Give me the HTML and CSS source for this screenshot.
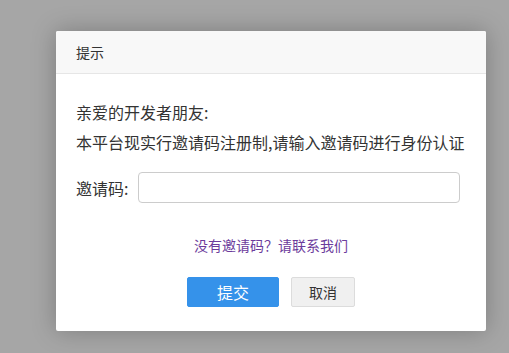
FILE: index.html
```html
<!DOCTYPE html>
<html lang="zh-CN">
<head>
  <meta charset="UTF-8" />
  <title>提示</title>
  <link rel="stylesheet" href="styles.css">
</head>
<body>

  <div class="dialog">
    <!-- Header -->
    <div class="dialog-head">提示</div>

    <!-- Body -->
    <div class="dialog-body">
      <p class="msg">亲爱的开发者朋友:</p>
      <p class="msg">本平台现实行邀请码注册制,请输入邀请码进行身份认证</p>

      <div class="field">
        <label class="field-label" for="code">邀请码:</label>
        <input class="field-input" id="code" type="text">
      </div>

      <a class="contact" href="#">没有邀请码？请联系我们</a>

      <div class="actions">
        <button class="btn btn-primary">提交</button>
        <button class="btn btn-default">取消</button>
      </div>
    </div>
  </div>

</body>
</html>
```
FILE: styles.css
```css
:root {
  --overlay: #a6a6a6;
  --head-bg: #f8f8f8;
  --line: #e6e6e6;
  --text: #333;
  --primary: #3592ea;
  --link: #6c3c9c;
}

html, body {
  height: 100%;
}

body {
  margin: 0;
  padding: 31px 0 0 56px;
  box-sizing: border-box;
  background-color: var(--overlay);
  font-family: "Noto Sans CJK SC", "Noto Sans", sans-serif;
  color: var(--text);
  overflow: hidden;
}

.dialog {
  width: 430px;
  background: #fff;
  border-radius: 2px;
  box-shadow: 0 0 24px rgba(0,0,0,0.25);
  overflow: hidden;
}

.dialog-head {
  height: 42px;
  line-height: 42px;
  padding: 0 20px;
  background: var(--head-bg);
  border-bottom: 1px solid var(--line);
  font-size: 14px;
  color: #333;
}

.dialog-body {
  padding: 23px 26px 24px 20px;
  display: flex;
  flex-direction: column;
}

.msg {
  margin: 0;
  font-size: 16px;
  line-height: 30px;
  white-space: nowrap;
}

.field {
  display: flex;
  align-items: center;
  gap: 9px;
  margin-top: 15px;
}

.field-label {
  font-size: 16px;
  width: 53px;
}

.field-input {
  flex: 1;
  height: 31px;
  box-sizing: border-box;
  border: 1px solid #ccc;
  border-radius: 4px;
  outline: none;
  padding: 0 8px;
}

.contact {
  align-self: center;
  margin-top: 32px;
  margin-left: 6px;
  font-size: 14px;
  line-height: 20px;
  color: var(--link);
  text-decoration: none;
}

.actions {
  display: flex;
  justify-content: center;
  gap: 12px;
  margin-top: 22px;
  margin-left: 6px;
}

.btn {
  height: 30px;
  box-sizing: border-box;
  border-radius: 2px;
  font-family: inherit;
  cursor: pointer;
  padding: 0;
}

.btn-primary {
  width: 92px;
  background: var(--primary);
  border: 1px solid var(--primary);
  color: #fff;
  font-size: 16px;
}

.btn-default {
  width: 64px;
  background: #f0f0f0;
  border: 1px solid #dcdcdc;
  color: #333;
  font-size: 14px;
}
```
